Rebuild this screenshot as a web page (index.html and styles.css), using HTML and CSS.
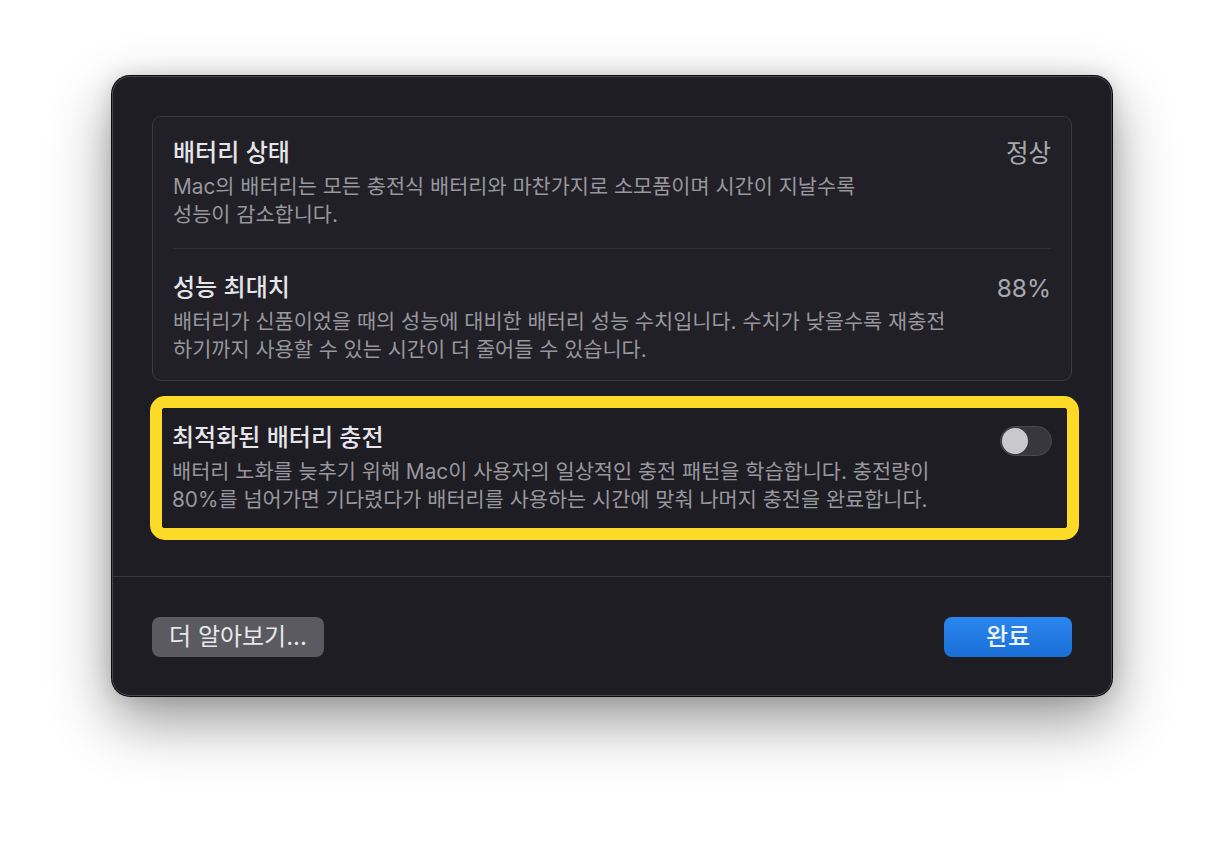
FILE: index.html
```html
<!DOCTYPE html>
<html lang="ko">
<head>
<meta charset="utf-8">
<link rel="stylesheet" href="styles.css">
</head>
<body>
<div class="window">
  <div class="content">
    <div class="group">
      <div class="row">
        <div class="text">
          <div class="title">배터리 상태</div>
          <div class="desc">Mac의 배터리는 모든 충전식 배터리와 마찬가지로 소모품이며 시간이 지날수록<br>성능이 감소합니다.</div>
        </div>
        <div class="value">정상</div>
      </div>
      <div class="sep"></div>
      <div class="row row2">
        <div class="text">
          <div class="title">성능 최대치</div>
          <div class="desc">배터리가 신품이었을 때의 성능에 대비한 배터리 성능 수치입니다. 수치가 낮을수록 재충전<br>하기까지 사용할 수 있는 시간이 더 줄어들 수 있습니다.</div>
        </div>
        <div class="value">88%</div>
      </div>
    </div>
    <div class="highlight">
      <div class="hl-inner">
        <div class="text">
          <div class="title">최적화된 배터리 충전</div>
          <div class="desc">배터리 노화를 늦추기 위해 Mac이 사용자의 일상적인 충전 패턴을 학습합니다. 충전량이<br>80%를 넘어가면 기다렸다가 배터리를 사용하는 시간에 맞춰 나머지 충전을 완료합니다.</div>
        </div>
        <div class="toggle"><div class="knob"></div></div>
      </div>
    </div>
  </div>
  <div class="footer">
    <div class="btn btn-gray">더 알아보기...</div>
    <div class="btn btn-blue">완료</div>
  </div>
</div>
</body>
</html>
```
FILE: styles.css
```css
html, body {
  margin: 0;
  padding: 0;
  background: #ffffff;
}
body {
  font-family: Inter, "Noto Sans CJK KR", sans-serif;
  width: 1224px;
  height: 844px;
  overflow: hidden;
}
.window {
  width: 1000px;
  box-sizing: border-box;
  margin: 76px auto 0;
  background: #1e1d24;
  border: 1px solid #4a494f;
  border-radius: 18px;
  box-shadow: 0 0 0 1px #0a0a0c, 0 24px 60px rgba(0, 0, 0, 0.42), 0 0 20px rgba(0,0,0,0.15);
}
.content {
  padding: 39px 39px 36px;
}
.group {
  background: #212027;
  border: 1px solid #3b3a41;
  border-radius: 9px;
}
.row {
  display: flex;
  justify-content: space-between;
  align-items: flex-start;
  padding: 21px 20px 19px;
}
.row2 {
  padding-top: 24px;
  padding-bottom: 16px;
}
.sep {
  height: 1px;
  background: #302f36;
  margin: 0 20px;
}
.title {
  font-size: 24px;
  line-height: 30px;
  color: #e6e5ea;
  font-weight: 500;
}
.desc {
  margin-top: 5px;
  font-size: 20.8px;
  line-height: 28px;
  color: #98979d;
}
.value {
  font-size: 24.5px;
  line-height: 30px;
  color: #a9a8ae;
}
.highlight {
  margin: 15px 0 0 -2px;
  width: 929px;
  box-sizing: border-box;
  border: 12px solid #fdd928;
  border-radius: 15px;
}
.hl-inner {
  display: flex;
  justify-content: space-between;
  align-items: flex-start;
  background: #1e1d24;
  border-radius: 3px;
  padding: 15px 15px 14px 10px;
}
.toggle {
  margin-top: 3px;
  width: 52px;
  height: 30px;
  box-sizing: border-box;
  border-radius: 15px;
  background: #38373d;
  border: 1px solid #4a4950;
  padding: 1px;
}
.knob {
  width: 26px;
  height: 26px;
  border-radius: 50%;
  background: #c9c8cd;
}
.footer {
  border-top: 1px solid #37363c;
  padding: 40px 39px 38px;
  display: flex;
  justify-content: space-between;
}
.btn {
  height: 40px;
  box-sizing: border-box;
  border-radius: 8px;
  font-size: 24px;
  line-height: 40px;
  text-align: center;
}
.btn-gray {
  width: 172px;
  background: #5b5a60;
  color: #e8e7ec;
}
.btn-blue {
  width: 128px;
  background: linear-gradient(#2b86ef, #1a6fd6);
  color: #eef4ff;
  font-weight: 500;
}
```
